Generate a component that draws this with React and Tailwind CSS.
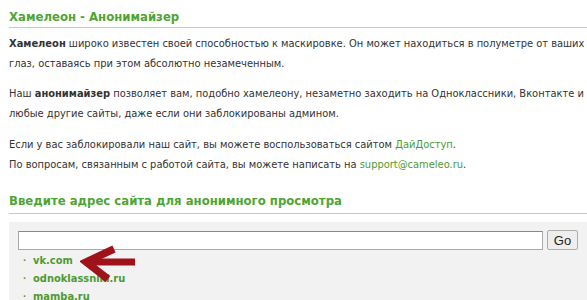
import React, { useState } from 'react';

const sites = ['vk.com', 'odnoklassniki.ru', 'mamba.ru'];

export default function App() {
    const [url, setUrl] = useState('')

    return (
        <div className="w-[587px] h-[300px] overflow-hidden bg-white text-[#333] font-['DejaVu_Sans_Condensed','DejaVu_Sans',sans-serif] font-stretch-condensed text-[11px]">
            <div className="w-[640px] pl-[9px] pt-[8px]">
                <h1 className="text-[13px] font-bold text-[#4ea534] pb-[2px] border-b border-[#c8c8c8] leading-[17px]">
                    Хамелеон - Анонимайзер
                </h1>

                <div className="pt-[6px] leading-[19.5px] whitespace-nowrap">
                    <p><b>Хамелеон</b> широко известен своей способностью к маскировке. Он может находиться в полуметре от ваших</p>
                    <p>глаз, оставаясь при этом абсолютно незамеченным.</p>
                </div>
                <div className="pt-[11px] leading-[19.5px] whitespace-nowrap">
                    <p>Наш <b>анонимайзер</b> позволяет вам, подобно хамелеону, незаметно заходить на Одноклассники, Вконтакте и</p>
                    <p>любые другие сайты, даже если они заблокированы админом.</p>
                </div>
                <div className="pt-[12px] leading-[19.5px] whitespace-nowrap">
                    <p>Если у вас заблокировали наш сайт, вы можете воспользоваться сайтом <a className="text-[#4e9a34]">ДайДоступ</a>.</p>
                    <p>По вопросам, связанным с работой сайта, вы можете написать на <a className="text-[#4e9a34]">support@cameleo.ru</a>.</p>
                </div>

                <h2 className="mt-[18px] text-[13px] font-bold text-[#4ea534] pb-[4px] border-b border-[#c8c8c8] leading-[17px]">
                    Введите адрес сайта для анонимного просмотра
                </h2>

                <div className="mt-[8px] bg-[#f2f2f2] pl-[9px] pt-[8px] pb-[20px] relative">
                    <div className="flex items-center gap-[4px]">
                        <input
                            value={url}
                            onChange={(e) => setUrl(e.target.value)}
                            className="w-[525px] h-[19px] bg-white border border-[#a9a9a9] border-t-[#888] outline-none px-1 text-[12px]"
                        />
                        <button className="h-[20px] w-[31px] bg-[#eeeeee] border border-[#adadad] rounded-[2px] text-[13px] text-[#222] font-['Liberation_Sans',Arial,sans-serif] font-stretch-normal leading-none">
                            Go
                        </button>
                    </div>
                    <ul className="mt-[2px] pl-[5px]">
                        {sites.map((s) => (
                            <li key={s} className="flex items-center h-[18px] font-bold">
                                <span className="text-[#4e9a34] text-[9px] w-[10px]">·</span>
                                <a className="text-[#4e9a34]">{s}</a>
                            </li>
                        ))}
                    </ul>
                    {/* red arrow pointing at vk.com */}
                    <svg className="absolute left-[71px] top-[23px]" width="60" height="40" viewBox="0 0 60 40">
                        <path d="M34 4 L6 17 L28 34" stroke="#a0121a" strokeWidth="7.5" strokeLinejoin="miter" strokeMiterlimit="10" fill="none" />
                        <path d="M10 17 L55 17" stroke="#a0121a" strokeWidth="7" fill="none" />
                    </svg>
                </div>
            </div>
        </div>
    )
}
